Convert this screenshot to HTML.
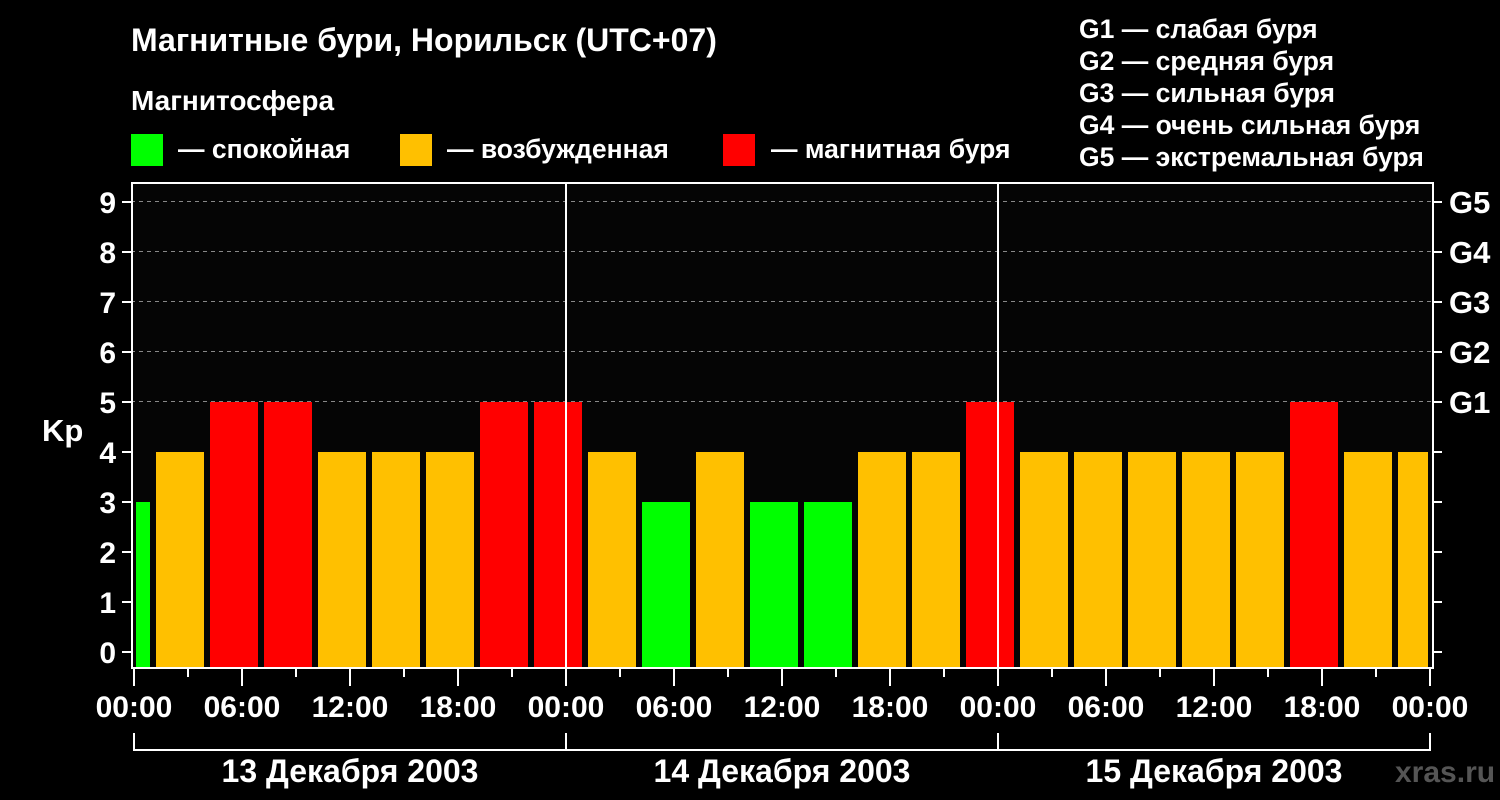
<!DOCTYPE html>
<html><head><meta charset="utf-8"><style>
body{margin:0;background:#000;width:1500px;height:800px;overflow:hidden}
svg{display:block;font-family:"Liberation Sans",Arial,sans-serif;font-weight:bold}
</style></head><body>
<svg width="1500" height="800" viewBox="0 0 1500 800">
<rect width="1500" height="800" fill="#000"/>
<rect x="131" y="183" width="1302" height="485" fill="#050505"/>
<g fill="#fff">
<text x="131" y="51" font-size="32">Магнитные бури, Норильск (UTC+07)</text>
<text x="131" y="110" font-size="28">Магнитосфера</text>
<text x="178" y="158" font-size="26.5">— спокойная</text>
<text x="447" y="158" font-size="26.5">— возбужденная</text>
<text x="771" y="158" font-size="26.5">— магнитная буря</text>
<g font-size="26.5">
<text x="1079" y="38">G1 — слабая буря</text>
<text x="1079" y="70">G2 — средняя буря</text>
<text x="1079" y="102">G3 — сильная буря</text>
<text x="1079" y="134">G4 — очень сильная буря</text>
<text x="1079" y="166">G5 — экстремальная буря</text>
</g>
</g>
<rect x="131" y="134" width="32" height="32" fill="#00ff00"/>
<rect x="400" y="134" width="32" height="32" fill="#ffc000"/>
<rect x="723" y="134" width="32" height="32" fill="#ff0000"/>
<g stroke="#888" stroke-dasharray="4,4" stroke-width="1">
<line x1="131" y1="201.5" x2="1433" y2="201.5"/>
<line x1="131" y1="251.5" x2="1433" y2="251.5"/>
<line x1="131" y1="301.5" x2="1433" y2="301.5"/>
<line x1="131" y1="351.5" x2="1433" y2="351.5"/>
<line x1="131" y1="401.5" x2="1433" y2="401.5"/>
</g>
<rect x="136" y="502" width="14" height="166" fill="#00ff00"/>
<g>
<rect x="156" y="452" width="48" height="216" fill="#ffc000"/>
<rect x="210" y="402" width="48" height="266" fill="#ff0000"/>
<rect x="264" y="402" width="48" height="266" fill="#ff0000"/>
<rect x="318" y="452" width="48" height="216" fill="#ffc000"/>
<rect x="372" y="452" width="48" height="216" fill="#ffc000"/>
<rect x="426" y="452" width="48" height="216" fill="#ffc000"/>
<rect x="480" y="402" width="48" height="266" fill="#ff0000"/>
<rect x="534" y="402" width="48" height="266" fill="#ff0000"/>
<rect x="588" y="452" width="48" height="216" fill="#ffc000"/>
<rect x="642" y="502" width="48" height="166" fill="#00ff00"/>
<rect x="696" y="452" width="48" height="216" fill="#ffc000"/>
<rect x="750" y="502" width="48" height="166" fill="#00ff00"/>
<rect x="804" y="502" width="48" height="166" fill="#00ff00"/>
<rect x="858" y="452" width="48" height="216" fill="#ffc000"/>
<rect x="912" y="452" width="48" height="216" fill="#ffc000"/>
<rect x="966" y="402" width="48" height="266" fill="#ff0000"/>
<rect x="1020" y="452" width="48" height="216" fill="#ffc000"/>
<rect x="1074" y="452" width="48" height="216" fill="#ffc000"/>
<rect x="1128" y="452" width="48" height="216" fill="#ffc000"/>
<rect x="1182" y="452" width="48" height="216" fill="#ffc000"/>
<rect x="1236" y="452" width="48" height="216" fill="#ffc000"/>
<rect x="1290" y="402" width="48" height="266" fill="#ff0000"/>
<rect x="1344" y="452" width="48" height="216" fill="#ffc000"/>
<rect x="1398" y="452" width="30" height="216" fill="#ffc000"/>
</g>
<g stroke="#fff" stroke-width="2" fill="none">
<rect x="132" y="183" width="1301" height="485"/>
<line x1="566" y1="183" x2="566" y2="668"/>
<line x1="998" y1="183" x2="998" y2="668"/>
<path d="M122 652H131M122 602H131M122 552H131M122 502H131M122 452H131M122 402H131M122 352H131M122 302H131M122 252H131M122 202H131"/>
<path d="M1433 652H1442M1433 602H1442M1433 552H1442M1433 502H1442M1433 452H1442M1433 402H1442M1433 352H1442M1433 302H1442M1433 252H1442M1433 202H1442"/>
<path d="M134 669V686M188 669V677M242 669V686M296 669V677M350 669V686M404 669V677M458 669V686M512 669V677M566 669V686M620 669V677M674 669V686M728 669V677M782 669V686M836 669V677M890 669V686M944 669V677M998 669V686M1052 669V677M1106 669V686M1160 669V677M1214 669V686M1268 669V677M1322 669V686M1376 669V677M1430 669V686"/>
<path d="M134 733V750H1430V733M566 733V750M998 733V750"/>
</g>
<g fill="#fff" font-size="30" text-anchor="end">
<text x="116" y="663">0</text><text x="116" y="613">1</text><text x="116" y="563">2</text>
<text x="116" y="513">3</text><text x="116" y="463">4</text><text x="116" y="413">5</text>
<text x="116" y="363">6</text><text x="116" y="313">7</text><text x="116" y="263">8</text>
<text x="116" y="213">9</text>
</g>
<g fill="#fff" font-size="31">
<text x="42" y="441">Kp</text>
<text x="1449" y="213">G5</text><text x="1449" y="263">G4</text><text x="1449" y="313">G3</text>
<text x="1449" y="363">G2</text><text x="1449" y="413">G1</text>
</g>
<g fill="#fff" font-size="30" text-anchor="middle">
<text x="134" y="717">00:00</text><text x="242" y="717">06:00</text><text x="350" y="717">12:00</text>
<text x="458" y="717">18:00</text><text x="566" y="717">00:00</text><text x="674" y="717">06:00</text>
<text x="782" y="717">12:00</text><text x="890" y="717">18:00</text><text x="998" y="717">00:00</text>
<text x="1106" y="717">06:00</text><text x="1214" y="717">12:00</text><text x="1322" y="717">18:00</text>
<text x="1430" y="717">00:00</text>
</g>
<g fill="#fff" font-size="32" text-anchor="middle">
<text x="350" y="782">13 Декабря 2003</text>
<text x="782" y="782">14 Декабря 2003</text>
<text x="1214" y="782">15 Декабря 2003</text>
</g>
<text x="1395" y="782" fill="#555" font-size="30">xras.ru</text>
</svg>
</body></html>
